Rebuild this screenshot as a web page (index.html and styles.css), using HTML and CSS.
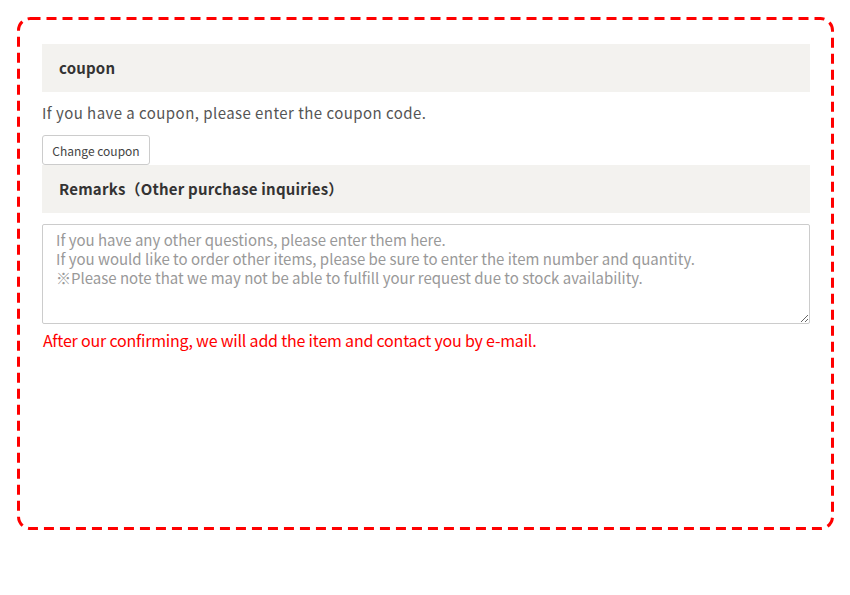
FILE: index.html
```html
<!DOCTYPE html>
<html lang="en">
<head>
    <meta charset="UTF-8">
    <meta name="viewport" content="width=device-width, initial-scale=1.0">
    <title>Coupon and remarks</title>
    <link rel="stylesheet" href="styles.css">
</head>
<body>
    <div class="order-box">
        <svg class="dash-frame" width="817" height="513" viewBox="0 0 817 513">
            <rect x="1.5" y="1.5" width="814" height="510" rx="12" ry="12" fill="none" stroke="#f00" stroke-width="3" stroke-dasharray="10 6"/>
        </svg>
        <h2 class="section-title">coupon</h2>
        <p class="coupon-note">If you have a coupon, please enter the coupon code.</p>
        <button class="coupon-btn">Change coupon</button>

        <h2 class="section-title">Remarks（Other purchase inquiries）</h2>
        <textarea class="remarks" placeholder="If you have any other questions, please enter them here.&#10;If you would like to order other items, please be sure to enter the item number and quantity.&#10;※Please note that we may not be able to fulfill your request due to stock availability."></textarea>
        <p class="notice">After our confirming, we will add the item and contact you by e-mail.</p>
    </div>
</body>
</html>
```

FILE: styles.css
```css
body {
    margin: 0;
    padding: 17px;
    font-family: "Noto Sans CJK JP", "Noto Sans", sans-serif;
    color: #333;
    background: #fff;
}

.order-box {
    position: relative;
    box-sizing: border-box;
    width: 817px;
    height: 513px;
    padding: 27px 24px 0 25px;
}

.dash-frame {
    position: absolute;
    left: 0;
    top: 0;
}

.section-title {
    box-sizing: border-box;
    margin: 0;
    height: 48px;
    padding: 0 0 2px 17px;
    display: flex;
    align-items: center;
    background: #f3f2ef;
    font-size: 15px;
    font-weight: bold;
    color: #333;
    letter-spacing: 0.2px;
}

.coupon-note {
    margin: 10px 0 11px;
    font-size: 15px;
    line-height: 22px;
    color: #555;
    letter-spacing: 0.45px;
}

.coupon-btn {
    display: block;
    height: 30px;
    width: 108px;
    padding: 0;
    font-family: inherit;
    font-size: 12px;
    color: #444;
    background: #fff;
    border: 1px solid #ccc;
    border-radius: 3px;
}

.remarks {
    display: block;
    box-sizing: border-box;
    width: 768px;
    height: 100px;
    margin-top: 11px;
    padding: 5px 13px;
    font-family: "Noto Sans CJK JP", sans-serif;
    font-size: 15px;
    line-height: 19px;
    border: 1px solid #ccc;
    border-radius: 2px;
}

.remarks::placeholder {
    color: #999;
}

.notice {
    margin: 4px 0 0 1px;
    font-size: 16px;
    line-height: 24px;
    color: #f00;
    letter-spacing: -0.2px;
}
```
